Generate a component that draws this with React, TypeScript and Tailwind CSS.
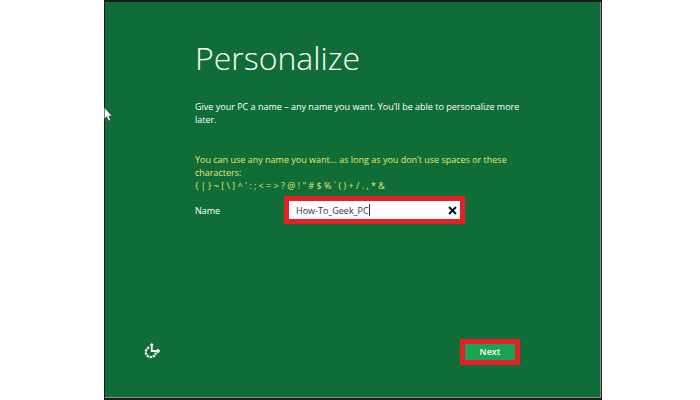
import { useState } from "react";

export default function App() {
  const [name, setName] = useState("How-To_Geek_PC");

  return (
    <div className="flex min-h-screen bg-white pr-[98px] pl-[104px] font-['Open_Sans','Noto_Sans',sans-serif] text-[9px] leading-[13px] text-white">
      <main className="relative flex flex-1 flex-col border border-t-2 border-b-2 border-[#1c1a1c] bg-[#106d38] shadow-[inset_-1px_-1px_0_#8d8d8d]">
        {/* mouse pointer */}
        <svg
          className="absolute top-[105px] -left-px h-[15px] w-[9px]"
          viewBox="0 0 9 15"
          aria-hidden="true"
        >
          <path
            d="M0.3 .5v11.5l2.4-2.2 1.9 4.2 2.1-.9-1.9-4.1h3.4z"
            fill="#fff"
            stroke="#173d25"
            strokeWidth=".6"
          />
        </svg>

        <form
          className="flex flex-1 flex-col pr-[81px] pl-[90px]"
          onSubmit={(e) => e.preventDefault()}
        >
          <h1 className="mt-9 text-[32px] leading-[40px] font-light whitespace-nowrap">
            Personalize
          </h1>
          <p className="mt-[22px]">
            Give your PC a name – any name you want. You’ll be able to
            personalize more later.
          </p>
          <p className="mt-[27px] text-[#e9e56c]">
            You can use any name you want... as long as you don’t use spaces or
            these characters:
            <br />
            {"{ | } ~ [ \\ ] ^ ' : ; < = > ? @ ! \" # $ % ` ( ) + / . , * &"}
          </p>

          <div className="mt-1 flex items-center">
            <label htmlFor="pc-name" className="w-[89px]">
              Name
            </label>
            <div className="relative flex h-7 w-[181px] items-stretch border-[5px] border-[#e61e25] bg-white">
              <input
                id="pc-name"
                type="text"
                value={name}
                onChange={(e) => setName(e.target.value)}
                className="w-full min-w-0 pl-[7px] text-[#333] outline-none"
              />
              <span className="absolute top-[3px] left-[80px] h-3 w-px bg-[#333]" />
              <button
                type="button"
                aria-label="Clear name"
                onClick={() => setName("")}
                className="px-[3px]"
              >
                <svg className="size-[9px]" viewBox="0 0 9 9">
                  <path
                    d="M1 1l7 7M8 1L1 8"
                    stroke="#111"
                    strokeWidth="2"
                    fill="none"
                  />
                </svg>
              </button>
            </div>
          </div>

          <button
            type="submit"
            className="mt-auto mb-[33px] h-[26px] w-[60px] self-end border-[5px] border-[#e61e25] bg-[#19a352] pb-px font-semibold"
          >
            Next
          </button>
        </form>

        {/* ease of access */}
        <button
          type="button"
          aria-label="Ease of access"
          className="absolute bottom-[39px] left-[39px]"
        >
          <svg className="size-4" viewBox="0 0 16 16" fill="none" stroke="#fff">
            <path
              d="M5.4 4.4A5 5 0 1 0 11.8 9.6"
              strokeWidth="2.2"
              strokeDasharray="2.4 .8"
            />
            <path d="M7.8 1v7h6.4" strokeWidth="1.8" />
            <path d="M6.2 2.4L7.8 .8l1.6 1.6M13.4 6l2 2-2 2" strokeWidth="1.2" />
          </svg>
        </button>
      </main>
    </div>
  );
}
